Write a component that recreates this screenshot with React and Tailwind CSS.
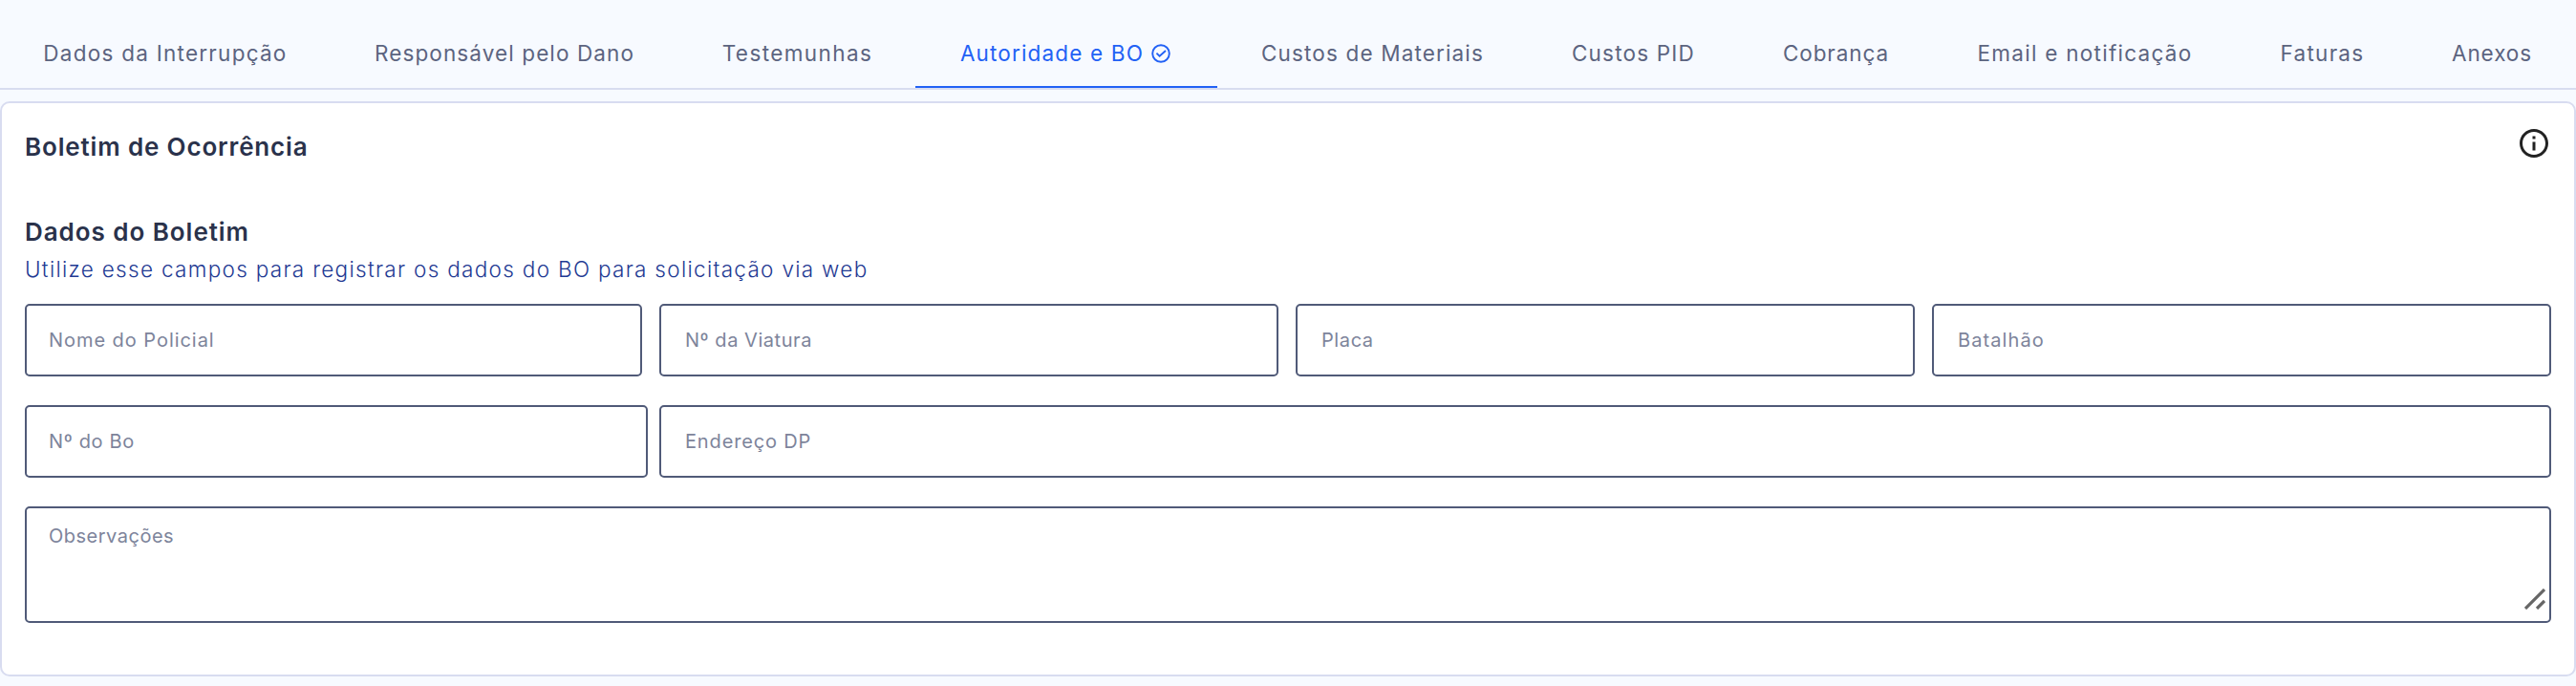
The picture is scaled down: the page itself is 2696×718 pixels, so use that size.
import { useState } from 'react'
import { MdInfoOutline } from 'react-icons/md'

const TABS = [
  { label: 'Dados da Interrupção', className: 'w-[346px] tracking-[1.25px]' },
  { label: 'Responsável pelo Dano', className: 'w-[364px] tracking-[1.11px]' },
  { label: 'Testemunhas', className: 'w-[248px] pl-px tracking-[1.41px]' },
  { label: 'Autoridade e BO', className: 'w-[316px] pr-0.5 tracking-[1.16px]', done: true },
  { label: 'Custos de Materiais', className: 'w-[325px] tracking-[1.15px]' },
  { label: 'Custos PID', className: 'w-[221px] tracking-[1.2px]' },
  { label: 'Cobrança', className: 'w-[203px] tracking-[0.93px]' },
  { label: 'Email e notificação', className: 'w-[318px] tracking-[1.27px]' },
  { label: 'Faturas', className: 'w-[179px] tracking-[1.25px]' },
  { label: 'Anexos', className: 'w-[176px] tracking-[0.9px]' },
]

const fieldClass =
  'block w-full rounded-[5px] border-2 border-[#505a78] bg-white text-[20px] text-[#505a78] outline-none placeholder:text-[#7d849b]'

function CheckCircle() {
  return (
    <svg viewBox="0 0 20 20" className="ml-2 size-5 shrink-0" fill="none" stroke="currentColor" strokeWidth="1.9">
      <circle cx="10" cy="10" r="8.8" />
      <path d="M5.4 9.6l3.2 3L15 7" />
    </svg>
  )
}

function Field({ label, className = '', inputClassName = 'px-6' }) {
  return (
    <div className={className}>
      <input
        type="text"
        placeholder={label}
        aria-label={label}
        className={`${fieldClass} h-[76px] pb-px ${inputClassName}`}
      />
    </div>
  )
}

export default function App() {
  const [active, setActive] = useState('Autoridade e BO')

  return (
    <div className="h-[718px] w-[2696px] overflow-hidden bg-[#f7faff] font-['Inter',sans-serif]">
      <nav className="flex h-[94px] border-b-2 border-[#d8dcf0] pt-[22px]">
        {TABS.map((tab) => (
          <button
            key={tab.label}
            type="button"
            onClick={() => setActive(tab.label)}
            className={`flex shrink-0 items-center justify-center border-b-2 whitespace-nowrap text-[22.5px] ${tab.className} ${
              active === tab.label ? 'border-[#2261f5] text-[#2261f5]' : 'border-transparent text-[#5c6480]'
            }`}
          >
            {tab.label}
            {tab.done && <CheckCircle />}
          </button>
        ))}
      </nav>

      <section className="mt-3 h-[602px] rounded-[10px] border-2 border-[#d8dcf0] bg-white px-6 pt-6">
        <header className="flex h-9 items-center justify-between">
          <h1 className="pt-[7px] text-[26px]/[36px] font-semibold tracking-[0.85px] text-[#2a324b]">
            Boletim de Ocorrência
          </h1>
          <MdInfoOutline className="size-9 text-[#222222]" />
        </header>

        <h2 className="mt-[58px] text-[26px]/[34px] font-semibold tracking-[0.95px] text-[#2a324b]">Dados do Boletim</h2>
        <p className="mt-1 text-[22.5px]/[36px] font-light tracking-[1.31px] text-[#1f3a93]">
          Utilize esse campos para registrar os dados do BO para solicitação via web
        </p>

        <form className="mt-[18px]">
          <div className="grid grid-cols-[646px_repeat(3,1fr)] gap-[18px]">
            <Field label="Nome do Policial" inputClassName="pl-[23px] tracking-[0.95px]" />
            <Field label="Nº da Viatura" inputClassName="pl-[25px] tracking-[0.55px]" />
            <Field label="Placa" inputClassName="pl-[25px] tracking-[0.6px]" />
            <Field label="Batalhão" inputClassName="pl-[25px] tracking-[1.1px]" />
          </div>
          <div className="mt-[30px] flex gap-3">
            <Field label="Nº do Bo" className="w-[652px]" inputClassName="pl-[23px] tracking-[0.65px]" />
            <Field label="Endereço DP" className="flex-1" inputClassName="pl-[25px] tracking-[0.85px]" />
          </div>
          <div className="relative mt-[30px]">
            <textarea
              placeholder="Observações"
              aria-label="Observações"
              className={`${fieldClass} h-[122px] resize-none pt-3.5 pl-[23px] tracking-[0.5px]`}
            />
            <svg viewBox="0 0 22 22" className="absolute right-[6px] bottom-[14px] size-[22px]" stroke="#666666" strokeWidth="3.2">
              <path d="M1 21L21 1M13 21L21 13" />
            </svg>
          </div>
        </form>
      </section>
    </div>
  )
}
